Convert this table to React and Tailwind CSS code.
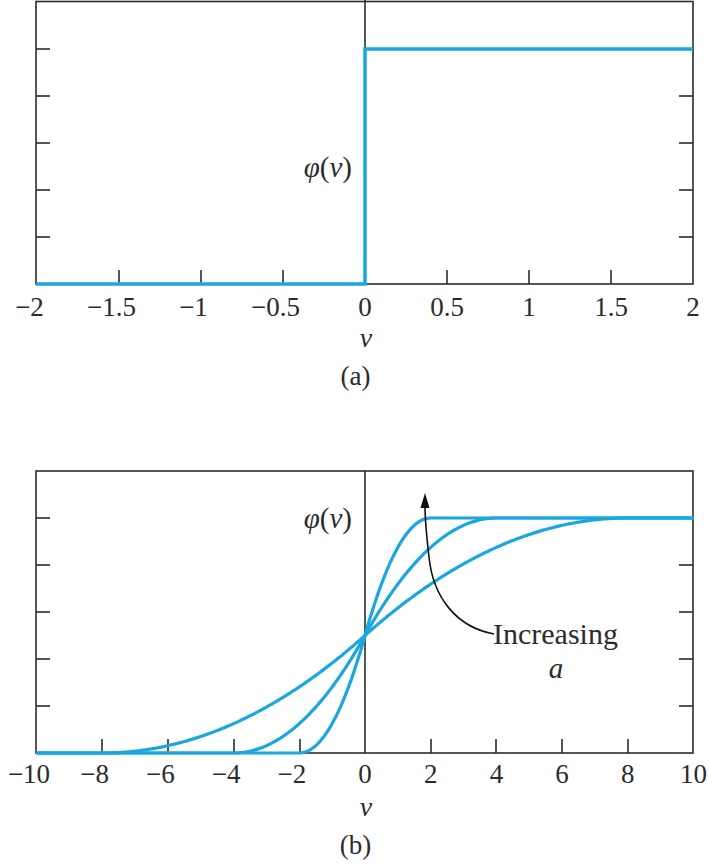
// Two activation-function plots: (a) threshold step, (b) sigmoid-like
// curves for increasing slope a. Plots are inline SVG, captions are flow text.

const BLUE = "#1aa6df";
const INK = "#2b2b2b";
const SERIF = "'Liberation Serif', 'Times New Roman', serif";

// frame spans x 36..693, zero axis at 365
const X0 = 36;
const X1 = 693;
const XZ = 365;

function Ticks({ bottom, top, yTicks, xTicks }) {
  return (
    <g stroke={INK} strokeWidth="1.6">
      <rect x={X0} y={top} width={X1 - X0} height={bottom - top} fill="none" />
      <line x1={XZ} y1={top < 5 ? 0 : top} x2={XZ} y2={bottom} />
      {yTicks.map((y) => (
        <g key={y}>
          <line x1={X0} y1={y} x2={X0 + 14} y2={y} />
          <line x1={X1 - 14} y1={y} x2={X1} y2={y} />
        </g>
      ))}
      {xTicks.map((x) => (
        <line key={x} x1={x} y1={bottom - 14} x2={x} y2={bottom} />
      ))}
    </g>
  );
}

function TickLabels({ labels, baseline }) {
  return (
    <g fill={INK} fontFamily={SERIF} fontSize="27" textAnchor="middle">
      {labels.map(([x, t]) => (
        <text key={t} x={t.startsWith("−") ? x - 7.5 : x} y={baseline}>
          {t}
        </text>
      ))}
    </g>
  );
}

function PhiLabel({ baseline }) {
  return (
    <text x="352" y={baseline} textAnchor="end" fill={INK} fontFamily={SERIF} fontSize="29">
      <tspan fontStyle="italic">φ</tspan>(<tspan fontStyle="italic">v</tspan>)
    </text>
  );
}

function AxisName({ baseline }) {
  return (
    <text x="366" y={baseline} textAnchor="middle" fill={INK} fontFamily={SERIF} fontSize="28" fontStyle="italic">
      v
    </text>
  );
}

const fmt = (v) => (v < 0 ? "−" + String(-v) : String(v));

function StepPlot() {
  const xs = [-2, -1.5, -1, -0.5, 0, 0.5, 1, 1.5, 2];
  return (
    <svg width="709" height="354" className="block">
      <Ticks
        top={1.5}
        bottom={284}
        yTicks={[49, 96, 143, 190, 237]}
        xTicks={[119, 201, 283, 447, 529, 611]}
      />
      <PhiLabel baseline={177} />
      <polyline
        points={`${X0},284 ${XZ},284 ${XZ},49 ${X1},49`}
        fill="none"
        stroke={BLUE}
        strokeWidth="3.5"
      />
      <TickLabels baseline={316} labels={xs.map((v) => [XZ + v * 164, fmt(v)])} />
      <AxisName baseline={347} />
    </svg>
  );
}

// smooth ramp that reaches 0 at -L and 1 at +L
function curvePoints(L) {
  const pts = [];
  for (let v = -10; v <= 10.001; v += 0.05) {
    let phi;
    if (v <= -L) phi = 0;
    else if (v >= L) phi = 1;
    else {
      const s = Math.sign(v);
      phi = 0.5 + 0.5 * s * (1 - Math.pow(1 - Math.abs(v) / L, 2));
    }
    pts.push(`${(XZ + v * 32.85).toFixed(1)},${(292 - phi * 235).toFixed(1)}`);
  }
  return pts.join(" ");
}

function SigmoidPlot() {
  const xs = [-10, -8, -6, -4, -2, 0, 2, 4, 6, 8, 10];
  return (
    <svg width="709" height="362" className="block">
      <Ticks
        top={10}
        bottom={292}
        yTicks={[57, 104, 151, 198, 245]}
        xTicks={[102, 168, 234, 300, 431, 496, 562, 628]}
      />
      <PhiLabel baseline={67} />
      {[8, 4, 2].map((L) => (
        <polyline key={L} points={curvePoints(L)} fill="none" stroke={BLUE} strokeWidth="3.2" strokeLinejoin="round" />
      ))}

      {/* "Increasing a" arrow */}
      <path d="M494 173 C 456 166, 433 136, 429 96 C 426 70, 425 56, 425 45" fill="none" stroke="#111" strokeWidth="1.6" />
      <polygon points="425,32 420.5,47 429.5,47" fill="#111" />
      <text x="493" y="183" fill={INK} fontFamily={SERIF} fontSize="30">Increasing</text>
      <text x="556" y="217" textAnchor="middle" fill={INK} fontFamily={SERIF} fontSize="29" fontStyle="italic">a</text>

      <TickLabels baseline={322} labels={xs.map((v) => [XZ + v * 32.85, fmt(v)])} />
      <AxisName baseline={355} />
    </svg>
  );
}

function Caption({ children, className }) {
  return (
    <div
      className={`w-[709px] flex justify-center text-[27px] leading-[27px] text-[#2b2b2b] ${className}`}
      style={{ fontFamily: SERIF }}
    >
      <span className="pl-[2px]">{children}</span>
    </div>
  );
}

export default function App() {
  return (
    <div className="w-[709px] h-[865px] bg-white flex flex-col overflow-hidden">
      <StepPlot />
      <Caption className="mt-[9px]">(a)</Caption>

      <div className="mt-[71px]">
        <SigmoidPlot />
      </div>
      <Caption className="mt-[9px]">(b)</Caption>
    </div>
  );
}
